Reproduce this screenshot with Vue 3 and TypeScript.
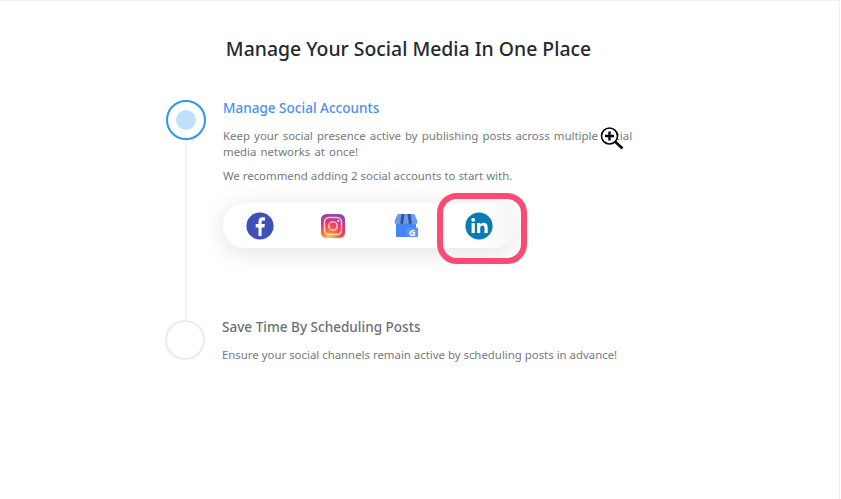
<template>
  <div class="page">
    <h1 class="title">Manage Your Social Media In One Place</h1>

    <div class="steps">
      <div class="step step-active">
        <div class="marker">
          <div class="circle circle-active"><span class="dot"></span></div>
          <div class="line"></div>
        </div>
        <div class="body">
          <h2 class="step-title">Manage Social Accounts</h2>
          <p class="text intro">Keep your social presence active by publishing posts across multiple social media networks at once!</p>
          <p class="text second">We recommend adding 2 social accounts to start with.</p>

          <div class="pill">
            <div class="network">
              <svg width="28" height="28" viewBox="0 0 28 28">
                <circle cx="14" cy="14" r="13.6" fill="#3f51b5" />
                <path d="M15.6 24v-8.6h2.8l.5-3.3h-3.3V10c0-1 .4-1.600 1.700-1.600h1.700V5.500c-.5-.1-1.400-.2-2.400-.2-2.500 0-4.100 1.500-4.100 4.200v2.600H9.700v3.300h2.800V24z" fill="#fff" />
              </svg>
            </div>
            <div class="network">
              <svg width="26" height="26" viewBox="0 0 26 26">
                <defs>
                  <radialGradient id="ig" cx="0.35" cy="1.05" r="1.2">
                    <stop offset="0" stop-color="#fdd25a" />
                    <stop offset="0.3" stop-color="#f9723a" />
                    <stop offset="0.6" stop-color="#e8316f" />
                    <stop offset="1" stop-color="#6a4fc8" />
                  </radialGradient>
                </defs>
                <rect x="1" y="1" width="24" height="24" rx="5.500" fill="url(#ig)" />
                <rect x="4.500" y="4.500" width="17" height="17" rx="4.500" fill="none" stroke="#fff" stroke-opacity=".7" stroke-width="1.500" />
                <circle cx="13" cy="13" r="4.200" fill="none" stroke="#fff" stroke-opacity=".7" stroke-width="1.500" />
                <circle cx="18.300" cy="7.700" r="1" fill="#fff" />
              </svg>
            </div>
            <div class="network">
              <svg width="26" height="26" viewBox="0 0 26 26">
                <path d="M3 10h20v13a1 1 0 0 1-1 1H4a1 1 0 0 1-1-1z" fill="#4285f4" />
                <path d="M5.500 1h15a1.500 1.500 0 0 1 1.400 1l2.600 6.500a3 3 0 0 1-3 3 3 3 0 0 1-2.700-1.700A3 3 0 0 1 16 11.500a3 3 0 0 1-3-1.700 3 3 0 0 1-3 1.700 3 3 0 0 1-2.800-1.700A3 3 0 0 1 4.500 11.500a3 3 0 0 1-3-3L4.100 2a1.500 1.500 0 0 1 1.400-1z" fill="#6f9ae8" />
                <path d="M8.500 1h3L10 11.500a3 3 0 0 1-2.800-1.700zM14.500 1h3l1.300 8.800A3 3 0 0 1 16 11.500z" fill="#34509f" />
                <rect x="13.500" y="14.500" width="11.500" height="9.500" rx="1" fill="#5a93f2" />
                <text x="19.200" y="23" class="g">G</text>
              </svg>
            </div>
            <div class="network network-linkedin">
              <svg width="28" height="28" viewBox="0 0 28 28">
                <circle cx="14" cy="14" r="13.600" fill="#0a7cb4" />
                <rect x="6.600" y="11" width="3.200" height="10" fill="#fff" />
                <circle cx="8.200" cy="7.800" r="1.900" fill="#fff" />
                <path d="M12 11h3.100v1.500c.6-1 1.800-1.800 3.400-1.800 3 0 4.200 1.800 4.200 4.900V21h-3.200v-4.800c0-1.600-.4-2.800-1.900-2.800s-2.400 1.100-2.400 2.800V21H12z" fill="#fff" />
              </svg>
              <div class="highlight"></div>
            </div>
          </div>
        </div>
      </div>

      <div class="step step-next">
        <div class="marker">
          <div class="circle"></div>
        </div>
        <div class="body">
          <h2 class="step-title">Save Time By Scheduling Posts</h2>
          <p class="text">Ensure your social channels remain active by scheduling posts in advance!</p>
        </div>
      </div>
    </div>

    <svg class="cursor" width="26" height="26" viewBox="0 0 26 26">
      <path d="M16 16l7 6.500" stroke="#fff" stroke-width="5" />
      <circle cx="9.500" cy="10" r="8" fill="#fff" stroke="#000" stroke-width="1.600" />
      <path d="M9.500 5.500v9M5 10h9" stroke="#000" stroke-width="2.400" />
      <path d="M15.500 16l7 6.500" stroke="#000" stroke-width="2.600" />
    </svg>
  </div>
</template>

<script setup lang="ts">
</script>

<style scoped>
.page {
  position: relative;
  box-sizing: border-box;
  width: 840px;
  height: 499px;
  padding-top: 36px;
  background: #fff;
  border-top: 1px solid #f2f2f2;
  border-right: 1px solid #f0f0f0;
  font-family: "Noto Sans", "Open Sans", sans-serif;
}

.title {
  margin: 0 0 39px;
  padding-right: 22px;
  text-align: center;
  font-size: 19.4px;
  line-height: 24px;
  font-weight: 500;
  color: #25282d;
}

.steps {
  padding-left: 166px;
}

.step {
  display: flex;
  gap: 17px;
}

.step-active {
  height: 220px;
}

.step-next {
  margin-left: -1px;
}

.marker {
  display: flex;
  flex-direction: column;
  align-items: center;
  width: 40px;
}

.circle {
  box-sizing: border-box;
  flex: none;
  display: flex;
  align-items: center;
  justify-content: center;
  width: 40px;
  height: 40px;
  border: 2px solid #eaebef;
  border-radius: 50%;
}

.circle-active {
  border-color: #2b96f5;
}

.dot {
  width: 20px;
  height: 20px;
  border-radius: 50%;
  background: #bfe0fb;
}

.line {
  flex: 1;
  width: 2px;
  background: #eff0f4;
}

.body {
  width: 415px;
}

.step-title {
  margin: -1px 0 0;
  font-size: 13.55px;
  line-height: 18px;
  font-weight: 500;
  color: #6b7075;
}

.step-next .step-title {
  margin-top: -2px;
}

.step-active .step-title {
  color: #4a90f5;
}

.text {
  margin: 11px 0 0;
  font-size: 11.4px;
  line-height: 16px;
  color: #75797e;
}

.text.intro {
  word-spacing: 1.2px;
}

.text.second {
  margin-top: 8px;
}

.pill {
  display: flex;
  align-items: center;
  box-sizing: border-box;
  width: 293px;
  height: 45px;
  margin-top: 19px;
  border-radius: 23px;
  background: linear-gradient(90deg, #fff 85%, #f6f6f6);
  box-shadow: 0 4px 26px rgba(0, 0, 0, 0.12);
}

.network {
  display: flex;
  align-items: center;
  justify-content: center;
  width: 73px;
}

.network svg {
  display: block;
}

.network-linkedin {
  position: relative;
}

.highlight {
  position: absolute;
  left: -5px;
  top: -19px;
  box-sizing: border-box;
  width: 90px;
  height: 71px;
  border: 6px solid #fb4a73;
  border-radius: 20px;
}

.g {
  font-size: 9px;
  font-weight: 700;
  fill: #fff;
  text-anchor: middle;
}

.cursor {
  position: absolute;
  left: 600px;
  top: 125px;
}
</style>
